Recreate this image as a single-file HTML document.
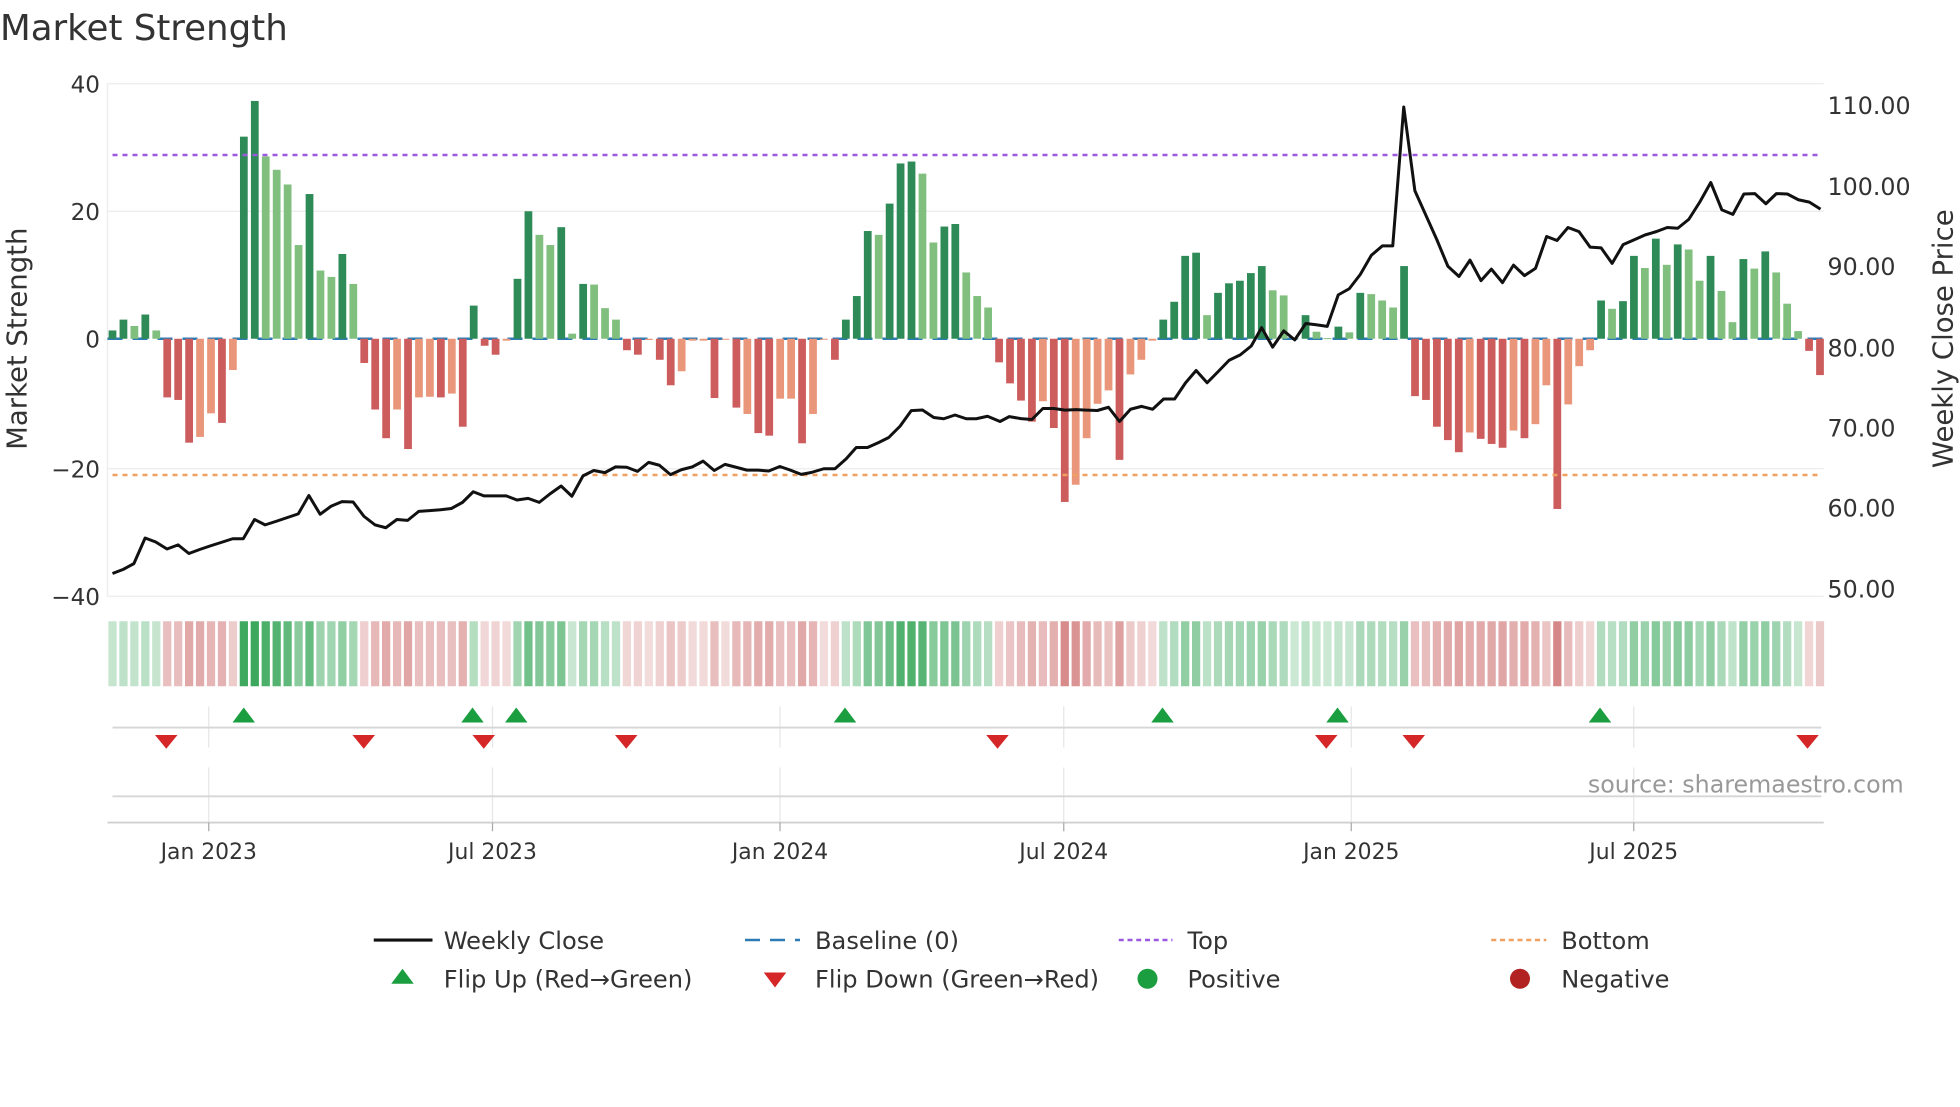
<!DOCTYPE html>
<html><head><meta charset="utf-8"><style>
html,body{margin:0;padding:0;background:#fff;overflow:hidden}
svg text{font-family:"DejaVu Sans","Liberation Sans",sans-serif}
</style></head><body>
<svg id="s" xmlns="http://www.w3.org/2000/svg" width="1960" height="1102" viewBox="0 0 1568 881.6">
<rect width="1568" height="882" fill="#fff"/>
<text x="0" y="32" font-size="28.5" fill="#333">Market Strength</text>
<g id="grid" stroke="#ececec" stroke-width="1">
<line x1="86" y1="67" x2="1459" y2="67"/><line x1="86" y1="169" x2="1459" y2="169"/>
<line x1="86" y1="375" x2="1459" y2="375"/><line x1="86" y1="477" x2="1459" y2="477"/>
<line x1="86" y1="67" x2="86" y2="477"/>
</g>
<line x1="86" y1="271" x2="1459" y2="271" stroke="#2c7bb6" stroke-width="2" stroke-dasharray="12 8"/>
<g id="bars"></g>
<line x1="90" y1="124" x2="1457" y2="124" stroke="#9b59e0" stroke-width="2" stroke-dasharray="4 4"/>
<line x1="90" y1="380" x2="1457" y2="380" stroke="#f0a060" stroke-width="2" stroke-dasharray="4 4"/>
<polyline id="price" fill="none" stroke="#111" stroke-width="2.4" stroke-linejoin="round"/>
<g id="heat"></g>
<g font-size="18.5" fill="#333" text-anchor="end">
<text x="80" y="74">40</text><text x="80" y="176">20</text><text x="80" y="278">0</text>
<text x="80" y="382">−20</text><text x="80" y="484">−40</text></g>
<g font-size="19" fill="#333">
<text x="1462" y="91">110.00</text><text x="1462" y="156">100.00</text><text x="1462" y="220">90.00</text>
<text x="1462" y="285">80.00</text><text x="1462" y="349">70.00</text><text x="1462" y="413">60.00</text><text x="1462" y="478">50.00</text></g>
<text transform="translate(21,271) rotate(-90)" font-size="22" fill="#333" text-anchor="middle">Market Strength</text>
<text transform="translate(1562,271) rotate(-90)" font-size="22" fill="#333" text-anchor="middle">Weekly Close Price</text>
<g stroke="#e6e6e6" stroke-width="1">
<line x1="167" y1="565" x2="167" y2="598"/><line x1="394" y1="565" x2="394" y2="598"/><line x1="624" y1="565" x2="624" y2="598"/>
<line x1="851" y1="565" x2="851" y2="598"/><line x1="1081" y1="565" x2="1081" y2="598"/><line x1="1307" y1="565" x2="1307" y2="598"/>
<line x1="167" y1="614" x2="167" y2="658"/><line x1="394" y1="614" x2="394" y2="658"/><line x1="624" y1="614" x2="624" y2="658"/>
<line x1="851" y1="614" x2="851" y2="658"/><line x1="1081" y1="614" x2="1081" y2="658"/><line x1="1307" y1="614" x2="1307" y2="658"/>
</g>
<line x1="90" y1="582" x2="1457" y2="582" stroke="#d6d6d6" stroke-width="1.5"/>
<line x1="90" y1="637" x2="1457" y2="637" stroke="#d6d6d6" stroke-width="1.5"/>
<line x1="86" y1="658" x2="1459" y2="658" stroke="#d0d0d0" stroke-width="1.5"/>
<g stroke="#aaa"><line x1="167" y1="658" x2="167" y2="665"/><line x1="394" y1="658" x2="394" y2="665"/><line x1="624" y1="658" x2="624" y2="665"/><line x1="851" y1="658" x2="851" y2="665"/><line x1="1081" y1="658" x2="1081" y2="665"/><line x1="1307" y1="658" x2="1307" y2="665"/></g>
<g id="mk"></g>
<text x="1523" y="634" font-size="19" fill="#999" text-anchor="end">source: sharemaestro.com</text>
<g font-size="17.5" fill="#333" text-anchor="middle">
<text x="167" y="687">Jan 2023</text><text x="394" y="687">Jul 2023</text><text x="624" y="687">Jan 2024</text>
<text x="851" y="687">Jul 2024</text><text x="1081" y="687">Jan 2025</text><text x="1307" y="687">Jul 2025</text></g>
<g font-size="19.3" fill="#333">
<line x1="299" y1="752" x2="346" y2="752" stroke="#111" stroke-width="2.5"/><text x="355" y="759">Weekly Close</text>
<line x1="596" y1="752" x2="640" y2="752" stroke="#2c7bb6" stroke-width="2" stroke-dasharray="12 8"/><text x="652" y="759">Baseline (0)</text>
<line x1="895" y1="752" x2="938" y2="752" stroke="#9b59e0" stroke-width="2" stroke-dasharray="4 3"/><text x="950" y="759">Top</text>
<line x1="1193" y1="752" x2="1237" y2="752" stroke="#f0a060" stroke-width="2" stroke-dasharray="4 3"/><text x="1249" y="759">Bottom</text>
<polygon points="322,775 331,787 313,787" fill="#1a9e3f"/><text x="355" y="790">Flip Up (Red→Green)</text>
<polygon points="611,778 629,778 620,790" fill="#d62728"/><text x="652" y="790">Flip Down (Green→Red)</text>
<circle cx="918" cy="783" r="8" fill="#1a9e3f"/><text x="950" y="790">Positive</text>
<circle cx="1216" cy="783" r="8" fill="#b22222"/><text x="1249" y="790">Negative</text>
</g>
</svg>
<script>
var NS="http://www.w3.org/2000/svg";
function el(p,t,a){var e=document.createElementNS(NS,t);for(var k in a)e.setAttribute(k,a[k]);p.appendChild(e);return e;}
var V=[[1.3,'D'],[3,'D'],[2,'L'],[3.8,'D'],[1.3,'L'],[-9.2,'R'],[-9.6,'R'],[-16.3,'R'],[-15.4,'O'],[-11.7,'O'],[-13.2,'R'],[-4.9,'O'],
[31.7,'D'],[37.3,'D'],[28.6,'L'],[26.5,'L'],[24.2,'L'],[14.7,'L'],[22.7,'D'],[10.7,'L'],[9.7,'L'],[13.3,'D'],[8.6,'L'],
[-3.8,'R'],[-11.1,'R'],[-15.6,'R'],[-11.1,'O'],[-17.3,'R'],[-9.2,'O'],[-9.1,'O'],[-9.2,'R'],[-8.6,'O'],[-13.8,'R'],
[5.2,'D'],[-1.1,'R'],[-2.5,'R'],[-0.3,'O'],[9.4,'D'],[20,'D'],[16.3,'L'],[14.7,'L'],[17.5,'D'],[0.8,'L'],[8.6,'D'],[8.5,'L'],[4.8,'L'],[3,'L'],
[-1.8,'R'],[-2.5,'R'],[-0.2,'O'],[-3.3,'R'],[-7.3,'R'],[-5.1,'O'],[-0.3,'O'],[-0.3,'O'],[-9.3,'R'],[-0.1,'O'],[-10.8,'R'],[-11.8,'O'],[-14.8,'R'],[-15.2,'R'],[-9.4,'O'],[-9.4,'O'],[-16.4,'R'],
[-11.8,'O'],[-0.1,'O'],[-3.3,'R'],[3,'D'],[6.7,'D'],[16.9,'D'],[16.3,'L'],[21.2,'D'],[27.5,'D'],[27.8,'D'],[25.9,'L'],[15.1,'L'],[17.6,'D'],[18,'D'],[10.4,'L'],[6.7,'L'],[4.9,'L'],
[-3.7,'R'],[-7,'R'],[-9.7,'R'],[-13,'R'],[-9.8,'O'],[-14,'R'],[-25.6,'R'],[-22.9,'O'],[-15.6,'O'],[-10.2,'O'],[-8.1,'O'],[-19,'R'],[-5.6,'O'],[-3.3,'O'],[-0.3,'O'],
[3,'D'],[5.8,'D'],[13,'D'],[13.5,'D'],[3.7,'L'],[7.2,'D'],[8.7,'D'],[9.1,'D'],[10.3,'D'],[11.4,'D'],[7.6,'L'],[6.8,'L'],[0.1,'L'],[3.7,'D'],[1.1,'L'],[0.1,'L'],[1.9,'D'],[1,'L'],[7.2,'D'],[7,'L'],[6,'L'],[4.9,'L'],[11.4,'D'],
[-9,'R'],[-9.6,'R'],[-13.8,'R'],[-15.9,'R'],[-17.8,'R'],[-14.7,'O'],[-15.7,'R'],[-16.5,'R'],[-17.1,'R'],[-14.4,'O'],[-15.6,'R'],[-13.4,'O'],[-7.3,'O'],[-26.7,'R'],[-10.3,'O'],[-4.3,'O'],[-1.8,'O'],
[6,'D'],[4.7,'L'],[5.9,'D'],[13,'D'],[11.1,'L'],[15.7,'D'],[11.6,'L'],[14.8,'D'],[14,'L'],[9.1,'L'],[13,'D'],[7.5,'L'],[2.6,'L'],[12.5,'D'],[11,'L'],[13.7,'D'],[10.4,'L'],[5.5,'L'],[1.2,'L'],[-1.9,'R'],[-5.7,'R']];
var C={D:'#2e8b57',L:'#80bf7e',R:'#cd5c5c',O:'#e9967a'};
var bars=document.getElementById('bars'),heat=document.getElementById('heat');
var n=V.length,step=(1456-90)/(n-1);
V.forEach(function(b,i){var x=90+i*step,v=b[0],h=Math.abs(v)*5.1;
 el(bars,'rect',{x:x-3.1,y:v>0?271-h:271,width:6.2,height:Math.max(h,0.8),fill:C[b[1]]});
 var g=(b[1]=='D'||b[1]=='L');
 var a=Math.min(0.25+0.65*Math.abs(v)/30,0.95);
 el(heat,'rect',{x:x-3.3,y:497,width:6.6,height:52,fill:g?'rgb(49,163,84)':'rgb(200,95,95)','fill-opacity':g?a:a*0.9});
});
var P1=[[28,1257],[52,1247],[76,1233],[101,1170],[125,1180],[150,1197],[175,1187],[199,1208],[224,1198],[248,1189],[272,1181],[297,1172],[321,1172],[346,1125],[370,1138],[395,1129],[420,1120],[444,1111],[468,1066],[493,1112],[518,1092],[542,1081],[567,1082],[591,1117],[616,1138],[640,1145],[665,1125],[689,1127],[714,1105],[738,1103],[763,1101],[787,1098],[812,1083],[836,1057],[860,1067],[885,1067],[910,1067],[934,1077],[959,1073],[984,1083],[1008,1062],[1033,1043],[1057,1068],[1082,1018],[1106,1005],[1131,1010],[1155,996],[1180,997],[1204,1007],[1229,985],[1253,992],[1278,1015],[1302,1003],[1327,996],[1351,982],[1376,1005],[1400,990],[1425,997],[1449,1004],[1474,1004],[1498,1006],[1523,995],[1547,1008]];
var P3=[[632,376],[641,379.5],[649,378],[659,375],[668,375],[677,367],[685,358],[694,358],[703,354],[711,350],[720,341],[729,328.5],[738,328],[747,334],[755,335],[764,332],[773,335],[781,335],[790,333]];
var P2=[[0,885],[15,873],[34,878],[52,880],[70,853],[88,853],[106,857],[124,856],[141,857],[159,858],[177,850],[195,885],[213,855],[231,848],[249,855],[267,830],[285,830],[303,790],[320,760],[338,790],[356,763],[374,735],[392,722],[410,700],[427,655],[445,703],[463,663],[481,685],[499,645],[516,648],[534,652],[552,575],[570,560],[588,525],[606,478],[624,455],[641,455],[659,115],[677,320],[695,380],[713,440],[731,505],[749,530],[767,490],[785,540],[802,512],[820,545],[838,502],[856,528],[874,510],[892,432],[909,442],[927,410],[945,420],[963,458],[981,460],[999,498],[1017,452],[1035,440],[1053,428],[1071,420],[1089,410],[1106,412],[1124,390],[1142,348],[1160,300],[1178,367],[1196,378],[1214,328],[1232,327],[1250,352],[1267,327],[1285,328],[1303,342],[1321,348],[1339,365]];
var pts=[];
P1.forEach(function(p){var x=80+p[0]/2.8;if(x<630)pts.push(x.toFixed(1)+','+(48+p[1]/3.06).toFixed(1));});
P3.forEach(function(p){pts.push(p[0]+','+p[1]);});
P2.forEach(function(p){pts.push((800+p[0]/2.04).toFixed(1)+','+(48+p[1]/3.06).toFixed(1));});
document.getElementById('price').setAttribute('points',pts.join(' '));
var mk=document.getElementById('mk');
[195,378,413,676,930,1070,1280].forEach(function(x){el(mk,'polygon',{points:(x)+',566 '+(x+9)+',578 '+(x-9)+',578',fill:'#1a9e3f'});});
[133,291,387,501,798,1061,1131,1446].forEach(function(x){el(mk,'polygon',{points:(x-9)+',588 '+(x+9)+',588 '+x+',599',fill:'#d62728'});});
</script>
</body></html>
